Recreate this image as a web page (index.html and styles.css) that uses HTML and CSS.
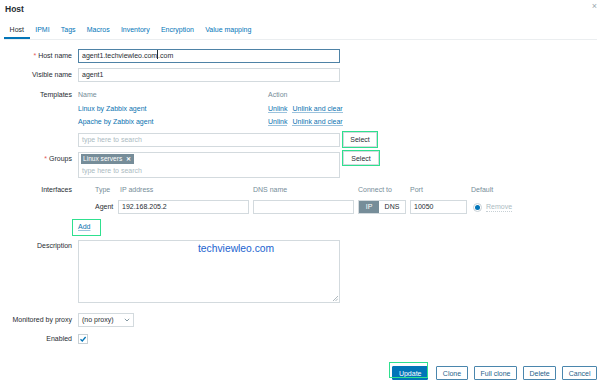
FILE: index.html
```html
<!DOCTYPE html>
<html lang="en">
<head>
  <meta charset="UTF-8" />
  <title>Host</title>
  <link rel="stylesheet" href="styles.css">
</head>
<body>
  <div class="dialog">
    <div class="dialog-head">
      <h2>Host</h2>
      <span class="close">&times;</span>
    </div>

    <ul class="tabs">
      <li class="active">Host</li>
      <li>IPMI</li>
      <li>Tags</li>
      <li>Macros</li>
      <li>Inventory</li>
      <li>Encryption</li>
      <li>Value mapping</li>
    </ul>

    <div class="form">
      <div class="row r-host">
        <label class="lbl"><span class="req">*</span> Host name</label>
        <div class="input focus">agent1.techviewleo.com<span class="caret"></span>.com</div>
      </div>

      <div class="row r-visible">
        <label class="lbl">Visible name</label>
        <div class="input">agent1</div>
      </div>

      <div class="row r-templates">
        <label class="lbl">Templates</label>
        <div class="field">
          <div class="tpl-table">
            <div class="tpl-row tpl-head"><span class="c-name">Name</span><span class="c-act">Action</span></div>
            <div class="tpl-row"><span class="c-name"><a>Linux by Zabbix agent</a></span><span class="c-act"><a class="ul">Unlink</a><a class="ul">Unlink and clear</a></span></div>
            <div class="tpl-row"><span class="c-name"><a>Apache by Zabbix agent</a></span><span class="c-act"><a class="ul">Unlink</a><a class="ul">Unlink and clear</a></span></div>
          </div>
          <div class="with-btn">
            <div class="input placeholder">type here to search</div>
            <button class="btn-sel hl sel-1">Select</button>
          </div>
        </div>
      </div>

      <div class="row r-groups">
        <label class="lbl"><span class="req">*</span> Groups</label>
        <div class="with-btn top">
          <div class="multi">
            <span class="tag">Linux servers <b>&#x2715;</b></span>
            <span class="placeholder">type here to search</span>
          </div>
          <button class="btn-sel hl sel-2">Select</button>
        </div>
      </div>

      <div class="row r-ifaces">
        <label class="lbl">Interfaces</label>
        <div class="iface-grid">
          <span class="ih c-type">Type</span>
          <span class="ih c-ip">IP address</span>
          <span class="ih">DNS name</span>
          <span class="ih">Connect to</span>
          <span class="ih">Port</span>
          <span class="ih">Default</span>

          <span class="c-type agent">Agent</span>
          <div class="input">192.168.205.2</div>
          <div class="input"></div>
          <div class="toggle"><span class="on">IP</span><span>DNS</span></div>
          <div class="input">10050</div>
          <div class="default"><span class="radio"><span class="dot"></span></span><span class="remove">Remove</span></div>
        </div>
      </div>

      <div class="row r-add">
        <span class="lbl"></span>
        <a class="add hl">Add</a>
      </div>

      <div class="row r-desc">
        <label class="lbl">Description</label>
        <div class="textarea">
          <span class="wm">techviewleo.com</span>
          <svg class="grip" width="6" height="6" viewBox="0 0 6 6"><path d="M1 6L6 1M3.5 6L6 3.5" stroke="#9aa7ae" stroke-width="0.8"/></svg>
        </div>
      </div>

      <div class="row r-proxy">
        <label class="lbl">Monitored by proxy</label>
        <div class="select">(no proxy)
          <svg width="6" height="4" viewBox="0 0 6 4"><path d="M0.8 0.8L3 3L5.2 0.8" fill="none" stroke="#768d99" stroke-width="0.9"/></svg>
        </div>
      </div>

      <div class="row r-enabled">
        <label class="lbl">Enabled</label>
        <span class="check">
          <svg width="8" height="8" viewBox="0 0 8 8"><path d="M1.5 4.2L3.3 6L6.6 2" fill="none" stroke="#0275b8" stroke-width="1.3"/></svg>
        </span>
      </div>
    </div>

    <div class="footer">
      <button class="btn primary">Update</button>
      <button class="btn">Clone</button>
      <button class="btn">Full clone</button>
      <button class="btn">Delete</button>
      <button class="btn">Cancel</button>
    </div>
  </div>
</body>
</html>
```

FILE: styles.css
```css
* { box-sizing: border-box; margin: 0; padding: 0; }
html, body { height: 100%; }
body {
  font-family: 'Liberation Sans', Arial, sans-serif;
  font-size: 7px;
  color: #1f2c33;
  background: #fff;
}
.dialog { position: relative; width: 600px; height: 381px; }
.dialog-head { height: 20px; padding: 4px 0 0 5px; }
.dialog-head h2 { font-size: 8.5px; font-weight: bold; line-height: 11px; }
.close {
  position: absolute;
  top: 1px;
  right: 3px;
  font-size: 9px;
  color: #9aa7ae;
}

.tabs {
  list-style: none;
  display: flex;
  height: 20px;
  margin: 0 3px 0 4px;
  border-bottom: 1px solid #ebeef0;
}
.tabs li {
  padding: 0 5.6px;
  line-height: 19px;
  color: #0275b8;
}
.tabs li.active { color: #1f2c33; box-shadow: inset 0 -2px 0 #0275b8; }

.form { padding-top: 9px; }
.row { display: flex; align-items: flex-start; }
.lbl {
  flex: 0 0 72px;
  margin-right: 6px;
  text-align: right;
  line-height: 14px;
}
.req { color: #e45959; }

.input {
  width: 262px;
  height: 14px;
  border: 1px solid #d3dade;
  padding: 0 3px;
  line-height: 12px;
  white-space: nowrap;
  overflow: hidden;
}
.input.focus { border-color: #4e82a6; }
.caret {
  display: inline-block;
  width: 1px;
  height: 9px;
  background: #1f2c33;
  vertical-align: -1px;
}
.placeholder { color: #acbbc2; }

.r-visible { margin-top: 5px; }
.r-templates { margin-top: 6px; }
.tpl-table { width: 262px; }
.tpl-row { display: flex; height: 13px; line-height: 13px; white-space: nowrap; }
.tpl-head { height: 14px; line-height: 14px; color: #768d99; }
.c-name { flex: 0 0 190px; }
.c-act a + a { margin-left: 5px; }
a { color: #0a72b0; text-decoration: none; }
a.ul { border-bottom: 1px solid #9cc3dd; }

.with-btn { display: flex; align-items: flex-start; margin-top: 5px; }
.with-btn.top { margin-top: 0; }
.btn-sel {
  font: inherit;
  color: #1f2c33;
  background: #fff;
  border: 1px solid #d3dade;
  height: 14px;
  padding: 0 6px;
  margin-left: 3px;
}
.hl { outline: 1.5px solid #2fe08f; }
.sel-1 { margin-top: -1px; height: 15px; width: 34px; }
.sel-2 { margin-top: -1px; width: 36px; }

.r-groups { margin-top: 5px; }
.multi {
  width: 262px;
  height: 26px;
  border: 1px solid #d3dade;
  padding: 1px 2px;
  display: flex;
  flex-direction: column;
  align-items: flex-start;
}
.tag {
  background: #768d99;
  color: #fff;
  height: 10px;
  line-height: 10px;
  padding: 0 3px 0 2px;
  font-size: 6.6px;
}
.tag b { font-size: 6px; margin-left: 2px; }
.multi .placeholder { line-height: 13px; padding-left: 1px; }

.r-ifaces { margin-top: 6px; }
.r-ifaces .lbl { line-height: 12px; }
.iface-grid {
  display: grid;
  grid-template-columns: 36px 131px 101px 48px 57px auto;
  grid-template-rows: 12px 14px;
  column-gap: 4px;
  row-gap: 4px;
}
.ih { color: #768d99; line-height: 12px; }
.c-type { padding-left: 17px; }
.c-ip { padding-left: 2px; }
.agent { line-height: 14px; }
.iface-grid .input { width: auto; }
.toggle { display: flex; border: 1px solid #d3dade; height: 14px; line-height: 12px; }
.toggle span { flex: 1; text-align: center; }
.toggle .on { background: #768d99; color: #fff; flex: 0 0 20px; }
.default { display: flex; align-items: center; height: 14px; padding-left: 2px; }
.radio {
  width: 9px;
  height: 9px;
  border: 1px solid #c7d0d5;
  border-radius: 50%;
  display: flex;
  align-items: center;
  justify-content: center;
}
.dot { width: 5px; height: 5px; border-radius: 50%; background: #0275b8; }
.remove { margin-left: 4px; color: #acbbc2; border-bottom: 1px dotted #c7d0d5; line-height: 8px; }

.r-add { margin-top: 6px; }
.add {
  margin-left: -5px;
  padding: 0 5px;
  height: 15px;
  line-height: 14px;
  width: 27px;
}
.add { text-decoration: underline; text-decoration-color: #9cc3dd; }

.r-desc { margin-top: 5px; }
.r-desc .lbl { line-height: 12px; }
.textarea {
  position: relative;
  width: 262px;
  height: 63px;
  border: 1px solid #d3dade;
  padding: 1px 0 0 119px;
}
.wm { color: #1a63cf; font-size: 10.3px; line-height: 13px; }
.grip { position: absolute; right: 1px; bottom: 1px; }

.r-proxy { margin-top: 10px; }
.select {
  width: 56px;
  height: 14px;
  border: 1px solid #d3dade;
  padding: 0 3px;
  line-height: 12px;
  display: flex;
  justify-content: space-between;
  align-items: center;
}

.r-enabled { margin-top: 7px; }
.r-enabled .lbl { line-height: 10px; }
.check {
  width: 10px;
  height: 10px;
  border: 1px solid #c7d0d5;
  display: flex;
  align-items: center;
  justify-content: center;
}

.footer {
  display: flex;
  justify-content: flex-end;
  gap: 6px;
  margin-top: 22px;
  padding-right: 3px;
}
.btn {
  font: inherit;
  height: 14px;
  min-width: 32px;
  padding: 0 5.5px;
  background: #fff;
  color: #1f5f8a;
  border: 1px solid #4a86ad;
  border-radius: 1px;
}
.btn.primary {
  position: relative;
  background: #0275b8;
  color: #fff;
  border-color: #0275b8;
  margin-right: 2px;
}
.btn.primary::after {
  content: "";
  position: absolute;
  left: -4px;
  top: -5px;
  right: -1px;
  bottom: 1px;
  border: 1.5px solid #2fe08f;
}
```
